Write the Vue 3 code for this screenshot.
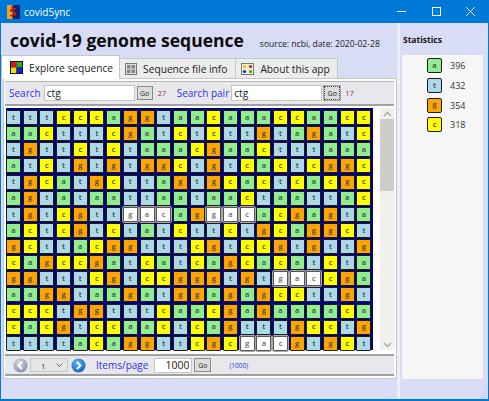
<template>
  <div class="window">
    <div class="titlebar">
      <svg class="appicon" width="13" height="14" viewBox="0 0 13 14">
        <rect x="0" y="0" width="6" height="14" fill="#e8a818" />
        <rect x="6" y="0" width="7" height="14" fill="#14207a" />
        <path d="M5 0.5V6" stroke="#402000" />
        <path d="M9 3.5C4 3.5 2 6 6 7C10 8 9 11 3 10.5" fill="none" stroke="#d81818" stroke-width="1.7" />
        <path d="M6 9V14" stroke="#402000" />
      </svg>
      <span class="apptitle">covid5ync</span>
      <div class="winbtns">
        <svg width="9" height="9" viewBox="0 0 9 9"><path d="M0 4.5H9" stroke="#fff" /></svg>
        <svg width="9" height="9" viewBox="0 0 9 9"><rect x=".5" y=".5" width="8" height="8" fill="none" stroke="#fff" /></svg>
        <svg width="9" height="9" viewBox="0 0 9 9"><path d="M0.3 0.3L8.7 8.7M8.7 0.3L0.3 8.7" stroke="#fff" /></svg>
      </div>
    </div>
    <div class="body">
      <div class="main">
        <div class="heading">
          <h1>covid-19 genome sequence</h1>
          <span class="source">source: ncbi, date: 2020-02-28</span>
        </div>
        <div class="tabs">
          <div class="tab active">
            <svg width="13" height="13" viewBox="0 0 13 13">
              <rect width="13" height="13" fill="#111" />
              <rect x="1" y="1" width="5.5" height="5.5" fill="#e01010" />
              <rect x="6.5" y="1" width="5.5" height="5.5" fill="#20b020" />
              <rect x="1" y="6.5" width="5.5" height="5.5" fill="#f0e000" />
              <rect x="6.5" y="6.5" width="5.5" height="5.5" fill="#1020d0" />
            </svg>
            Explore sequence
          </div>
          <div class="tab second">
            <svg width="12" height="12" viewBox="0 0 12 12">
              <rect x=".5" y=".5" width="11" height="11" fill="#ddd" stroke="#777" />
              <rect x="2" y="2" width="3.5" height="3.5" fill="#888" />
              <rect x="6.5" y="2" width="3.5" height="3.5" fill="#888" />
              <rect x="2" y="6.5" width="3.5" height="3.5" fill="#888" />
              <rect x="6.5" y="6.5" width="3.5" height="3.5" fill="#888" />
            </svg>
            Sequence file info
          </div>
          <div class="tab">
            <svg width="13" height="12" viewBox="0 0 13 12">
              <rect x=".5" y=".5" width="12" height="11" fill="#f4f0d8" stroke="#777" />
              <circle cx="3.5" cy="3.5" r="1.6" fill="#e8c000" />
              <circle cx="9.5" cy="3.5" r="1.6" fill="#e01010" />
              <circle cx="3.5" cy="8.5" r="1.6" fill="#1020d0" />
              <circle cx="9.5" cy="8.5" r="1.6" fill="#20b020" />
            </svg>
            About this app
          </div>
        </div>
        <div class="panel">
          <div class="searchbar">
            <label>Search</label>
            <input class="field" value="ctg" readonly />
            <button class="go">Go</button>
            <span class="count">27</span>
            <label class="pairlabel">Search pair</label>
            <input class="field" value="ctg" readonly />
            <button class="go focus">Go</button>
            <span class="count">17</span>
          </div>
          <div class="gridwrap">
            <div class="grid">
              <template v-for="(row, r) in rows" :key="r">
                <div
                  v-for="(ch, c) in row"
                  :key="c"
                  class="cell"
                  :class="isWhite(r, c) ? 'white' : ch"
                >{{ ch }}</div>
              </template>
            </div>
            <div class="scrollbar">
              <svg width="9" height="6" viewBox="0 0 9 6"><path d="M1 5L4.5 1.5L8 5" fill="none" stroke="#a6a6a6" stroke-width="1.3" /></svg>
              <div class="thumb"></div>
              <svg width="9" height="6" viewBox="0 0 9 6"><path d="M1 1L4.5 4.5L8 1" fill="none" stroke="#a6a6a6" stroke-width="1.3" /></svg>
            </div>
          </div>
          <div class="pager">
            <svg width="15" height="15" viewBox="0 0 15 15">
              <defs>
                <radialGradient id="greyball" cx=".4" cy=".3" r=".8">
                  <stop offset="0" stop-color="#d5d9e6" />
                  <stop offset="1" stop-color="#8088a8" />
                </radialGradient>
                <radialGradient id="blueball" cx=".4" cy=".3" r=".8">
                  <stop offset="0" stop-color="#5ab8f4" />
                  <stop offset="1" stop-color="#0a5cb0" />
                </radialGradient>
              </defs>
              <circle cx="7.5" cy="7.5" r="7" fill="url(#greyball)" />
              <path d="M9 4L5.5 7.5L9 11" fill="none" stroke="#fff" stroke-width="2" />
            </svg>
            <div class="select"><span>1</span>
              <svg width="7" height="4" viewBox="0 0 7 4"><path d="M.5 .5L3.5 3.5L6.5 .5" fill="none" stroke="#666" /></svg>
            </div>
            <svg width="15" height="15" viewBox="0 0 15 15">
              <circle cx="7.5" cy="7.5" r="7" fill="url(#blueball)" />
              <path d="M6 4L9.5 7.5L6 11" fill="none" stroke="#fff" stroke-width="2" />
            </svg>
            <label class="ipp">Items/page</label>
            <input class="pagefield" value="1000" readonly />
            <button class="go">Go</button>
            <span class="total">(1000)</span>
          </div>
        </div>
      </div>
      <div class="splitter"></div>
      <div class="side">
        <div class="sidetitle">Statistics</div>
        <div class="statlist">
          <div v-for="s in stats" :key="s.ch" class="statrow">
            <div class="cell statcell" :class="s.ch">{{ s.ch }}</div>
            <span>{{ s.n }}</span>
          </div>
        </div>
      </div>
    </div>
    <svg class="grip" width="8" height="8" viewBox="0 0 8 8">
      <path d="M6 0h1v1H6zM4 2h1v1H4zM6 2h1v1H6zM2 4h1v1H2zM4 4h1v1H4zM6 4h1v1H6zM0 6h1v1H0zM2 6h1v1H2zM4 6h1v1H4zM6 6h1v1H6z" fill="#b8bace" />
    </svg>
  </div>
</template>

<script setup>
const rows = [
  'tttcccaggtaacaaaccaacc',
  'aactttcgatctcttgtagatc',
  'tgttctctaaacgaactttaaa',
  'atctgtgtggctgtcactcggc',
  'tgcatgcttagtgcactcacgc',
  'agtataattaataactaattac',
  'tgtcgttgacaggacacgagta',
  'actcgtctatcttctgcaggct',
  'gcttacggtttcgtccgtgttg',
  'cagccgatcatcagcacatcta',
  'ggtttcgtccgggtgtgaccga',
  'aaggtaagatggagagccttgt',
  'ccctggtttcaacgagaaaaca',
  'cacgtccaactcagtttgcctg',
  'ttttacaggttcgcgacgtgct',
]

// g-a-c runs drawn white, the current search hits
const hits = {
  6: [7, 8, 9, 12, 13, 14],
  10: [16, 17, 18],
  14: [14, 15, 16],
}
const isWhite = (r, c) => (hits[r] || []).includes(c)

const stats = [
  { ch: 'a', n: 396 },
  { ch: 't', n: 432 },
  { ch: 'g', n: 354 },
  { ch: 'c', n: 318 },
]
</script>

<style>
html, body { margin: 0; overflow: hidden; }
</style>

<style scoped>
.window {
  position: relative;
  width: 489px;
  height: 401px;
  box-sizing: border-box;
  border: 1px solid #0078d7;
  border-top: 0;
  border-bottom-width: 2px;
  display: flex;
  flex-direction: column;
  font-family: "Open Sans", "Noto Sans", sans-serif;
  background: #d9dcf5;
  overflow: hidden;
}
.titlebar {
  height: 23px;
  flex: none;
  background: #0078d7;
  color: #fff;
  display: flex;
  align-items: center;
  padding-left: 6px;
  font-size: 10px;
}
.appicon { margin-right: 4px; }
.winbtns {
  margin-left: auto;
  display: flex;
  gap: 25.5px;
  padding-right: 13px;
  align-items: center;
}
.body { flex: 1; display: flex; min-height: 0; }
.main { width: 396px; flex: none; }
.heading {
  display: flex;
  align-items: baseline;
  height: 32px;
  padding-left: 9px;
}
h1 {
  margin: 0;
  font-size: 17.5px;
  font-weight: 700;
  line-height: 35px;
  color: #0b0b0b;
}
.source { margin-left: 16px; font-size: 8.6px; color: #222; }
.tabs { display: flex; height: 23px; align-items: flex-end; }
.tab {
  display: flex;
  align-items: center;
  gap: 6px;
  height: 20px;
  padding: 0 7px 0 5px;
  background: #ececec;
  border: 1px solid #c6c6c6;
  border-bottom: 0;
  box-sizing: border-box;
  font-size: 10.2px;
  color: #222;
}
.tab + .tab { margin-left: -1px; }
.tab.second { padding-right: 8px; }
.tab.active {
  height: 24px;
  background: #fff;
  padding: 0 6px 0 8px;
  z-index: 1;
  margin-bottom: -1px;
}
.panel {
  margin-left: 2px;
  width: 394px;
  height: 301px;
  box-sizing: border-box;
  background: #fff;
  border: 1px solid #c6c6c6;
  padding: 2px 2px 0 1px;
}
.searchbar {
  display: flex;
  align-items: center;
  height: 25px;
  box-sizing: border-box;
  background: #e8e7ec;
  border-top: 1px solid #b4b4b4;
  border-bottom: 2px solid #a0a0a0;
  padding-left: 4px;
}
label { color: #3030f0; font-size: 10px; }
.field {
  width: 91px;
  height: 16px;
  box-sizing: border-box;
  margin-left: 3px;
  border: 1px solid #c4c4c4;
  font: 10.2px "Open Sans", sans-serif;
  padding: 0 2px;
  color: #222;
  outline: none;
}
.field + .go { margin-left: 2px; }
.pairlabel { margin-left: 7px; }
.pairlabel + .field { margin-left: 2px; }
.go {
  width: 16px;
  height: 14px;
  padding: 0;
  box-sizing: border-box;
  background: #ddd;
  border: 1px solid #8a8a8a;
  font: 7px "Open Sans", sans-serif;
  color: #222;
}
.go.focus { border: 1px dotted #444; outline: 1px solid #aaa; }
.count { font-size: 7.5px; color: #8a3060; margin-left: 5px; width: 12px; }
.gridwrap { display: flex; margin-top: 2px; height: 246px; }
.grid {
  display: grid;
  grid-template-columns: repeat(22, 15px);
  grid-auto-rows: 15px;
  column-gap: 1.7px;
  row-gap: 1.13px;
  margin-left: 1px;
  width: 367px;
  height: 242px;
  box-sizing: border-box;
  background: #00007c;
  padding-top: 2px;
  flex: none;
}
.cell {
  box-sizing: border-box;
  border: 1px solid #1c1c1c;
  border-radius: 1px;
  font-size: 7.5px;
  font-weight: 600;
  color: #444;
  display: flex;
  align-items: center;
  justify-content: center;
  line-height: 1;
}
.a { background: #90ee90; }
.t { background: #add8e6; }
.g { background: #ffa500; }
.c { background: #ffff00; }
.white { background: #fff; border-color: #555; outline: 1px solid #aaa; color: #666; }
.scrollbar {
  width: 14px;
  margin-left: 7px;
  background: #f0f0f0;
  display: flex;
  flex-direction: column;
  align-items: center;
  padding: 3px 0 2px;
  box-sizing: border-box;
  height: 242px;
}
.thumb {
  width: 14px;
  height: 72px;
  background: #cdcdcd;
  margin-top: 2px;
  margin-bottom: auto;
}
.pager {
  display: flex;
  align-items: center;
  height: 22px;
  box-sizing: border-box;
  background: #e8e7ec;
  border-top: 2px solid #a0a0a0;
  border-bottom: 2px solid #a0a0a0;
  padding-left: 8px;
}
.select {
  width: 38px;
  height: 14px;
  margin: 0 3px 0 2px;
  box-sizing: border-box;
  background: #e6e6e6;
  border: 1px solid #c8c8c8;
  font-size: 8px;
  display: flex;
  align-items: center;
  justify-content: space-between;
  padding: 0 4px 0 10px;
  color: #333;
}
.ipp { margin-left: 10px; }
.pagefield {
  width: 38px;
  height: 15px;
  margin: 0 2px 0 6px;
  box-sizing: border-box;
  border: 1px solid #c4c4c4;
  font: 10.5px "Open Sans", sans-serif;
  text-align: right;
  padding: 0 2px;
  color: #222;
  outline: none;
}
.pager .go { width: 17px; }
.total { font-size: 6.5px; color: #3030d0; margin-left: 18px; }
.splitter { width: 3px; background: #eeeef8; flex: none; }
.side { flex: 1; padding-left: 2px; }
.sidetitle {
  font-size: 8.5px;
  font-weight: 700;
  color: #111;
  height: 32px;
  line-height: 34px;
  padding-left: 1px;
}
.statlist {
  background: #f6f6f6;
  height: 324px;
  padding-top: 1px;
  box-sizing: border-box;
  width: 81px;
}
.statrow {
  display: flex;
  align-items: center;
  height: 19.7px;
  padding-left: 25px;
  font-size: 9px;
  color: #333;
  gap: 8px;
}
.statcell { width: 15px; height: 15px; border-radius: 2px; font-size: 7.5px; }
.grip { position: absolute; right: 0; bottom: 0; }
</style>
